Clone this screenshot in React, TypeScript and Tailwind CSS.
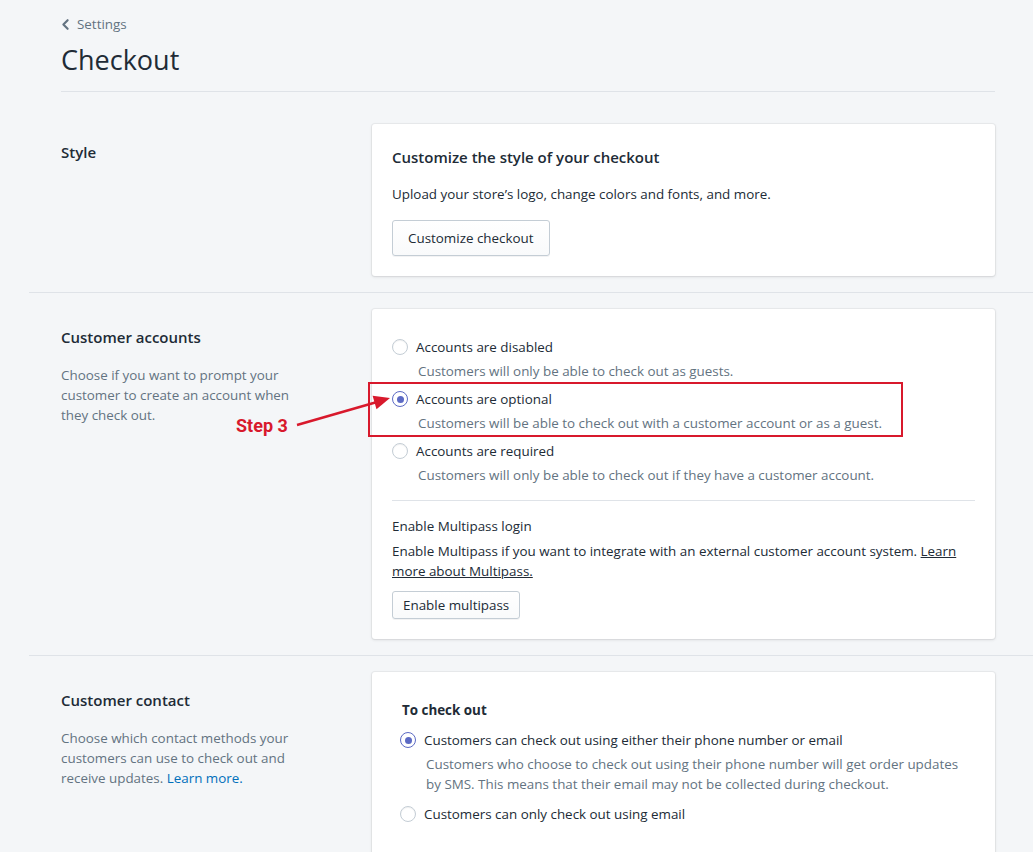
import React from 'react'
import { ChevronLeft } from 'lucide-react'

const Radio = ({ checked }: { checked?: boolean }) => (
  <span
    className={`flex h-4 w-4 shrink-0 items-center justify-center rounded-full border bg-white ${
      checked ? 'border-[#5c6ac4]' : 'border-[#c4cdd5] shadow-[inset_0_1px_1px_rgba(0,0,0,0.06)]'
    }`}
  >
    {checked && <span className="h-[7px] w-[7px] rounded-full bg-[#5c6ac4]" />}
  </span>
)

const Choice = ({ label, help, checked }: { label: string; help: string; checked?: boolean }) => (
  <div>
    <div className="flex items-center gap-2 h-5">
      <Radio checked={checked} />
      <span className="text-[13.4px] leading-5 text-[#212b36]">{label}</span>
    </div>
    <p className="mt-1 pl-[26px] text-[13.4px] leading-5 text-[#637381]">{help}</p>
  </div>
)

const Button = ({ children, slim }: { children: React.ReactNode; slim?: boolean }) => (
  <button
    className={`rounded-[3px] border border-[#c4cdd5] bg-gradient-to-b from-white to-[#f9fafb] text-[13.4px] text-[#212b36] shadow-[0_1px_0_rgba(22,29,37,0.05)] ${
      slim ? 'h-7 px-[10px]' : 'h-9 px-[15px]'
    }`}
  >
    {children}
  </button>
)

const Card = ({ children, className = '' }: { children: React.ReactNode; className?: string }) => (
  <div className={`rounded-[3px] bg-white shadow-[0_0_0_1px_rgba(63,63,68,0.05),0_1px_3px_0_rgba(63,63,68,0.15)] ${className}`}>
    {children}
  </div>
)

const SectionInfo = ({ title, children }: { title: string; children?: React.ReactNode }) => (
  <div className="pt-4 pr-5">
    <h2 className="text-[15px] leading-6 font-semibold text-[#212b36]">{title}</h2>
    {children && <p className="mt-4 max-w-[245px] text-[13.4px] leading-5 text-[#637381]">{children}</p>}
  </div>
)

export default function App() {
  return (
    <div className="relative min-h-screen overflow-hidden bg-[#f4f6f8] pl-[29px] font-['Open_Sans',sans-serif]">
      {/* header */}
      <div className="pl-[32px] pr-[38px]">
        <div className="flex items-center gap-[3px] pt-[14px] text-[13.4px] leading-5 text-[#637381]">
          <ChevronLeft size={17} strokeWidth={3} className="-ml-[4px]" />
          <span>Settings</span>
        </div>
        <h1 className="mt-[10px] text-[27px] leading-8 text-[#212b36]">Checkout</h1>
        <div className="mt-[15px] h-px bg-[#dfe3e8]" />
      </div>

      {/* Style */}
      <div className="grid grid-cols-[311px_1fr] pl-[32px] pr-[38px] pt-8 pb-4">
        <SectionInfo title="Style" />
        <Card className="p-5 pt-[21px]">
          <h3 className="text-[15px] leading-6 font-semibold text-[#212b36]">Customize the style of your checkout</h3>
          <p className="mt-[15px] text-[13.4px] leading-5 text-[#212b36]">Upload your store’s logo, change colors and fonts, and more.</p>
          <div className="mt-4">
            <Button>Customize checkout</Button>
          </div>
        </Card>
      </div>
      <div className="h-px bg-[#dfe3e8]" />

      {/* Customer accounts */}
      <div className="grid grid-cols-[311px_1fr] pl-[32px] pr-[38px] py-4">
        <SectionInfo title="Customer accounts">
          Choose if you want to prompt your customer to create an account when they check out.
        </SectionInfo>
        <Card className="px-5 pt-7 pb-5">
          <div className="space-y-2 pb-[15px]">
            <Choice label="Accounts are disabled" help="Customers will only be able to check out as guests." />
            <Choice checked label="Accounts are optional" help="Customers will be able to check out with a customer account or as a guest." />
            <Choice label="Accounts are required" help="Customers will only be able to check out if they have a customer account." />
          </div>
          <div className="h-px bg-[#dfe3e8]" />
          <div className="pt-[15px]">
            <p className="text-[13.4px] leading-5 text-[#212b36]">Enable Multipass login</p>
            <p className="mt-[5px] text-[13.4px] leading-5 text-[#212b36]">
              Enable Multipass if you want to integrate with an external customer account system.{' '}
              <a className="underline">Learn more about Multipass.</a>
            </p>
            <div className="mt-[10px]">
              <Button slim>Enable multipass</Button>
            </div>
          </div>
        </Card>
      </div>
      <div className="h-px bg-[#dfe3e8]" />

      {/* Customer contact */}
      <div className="grid grid-cols-[311px_1fr] pl-[32px] pr-[38px] py-4">
        <SectionInfo title="Customer contact">
          Choose which contact methods your customers can use to check out and receive updates.{' '}
          <a className="text-[#006fbb]">Learn more.</a>
        </SectionInfo>
        <Card className="pl-[28px] pr-5 pt-7 pb-10">
          <p className="ml-[2px] text-[13.4px] leading-5 font-bold text-[#212b36]">To check out</p>
          <div className="mt-[10px] space-y-[10px]">
            <div>
              <div className="flex h-5 items-center gap-2">
                <Radio checked />
                <span className="text-[13.4px] leading-5 text-[#212b36]">Customers can check out using either their phone number or email</span>
              </div>
              <p className="mt-1 max-w-[562px] pl-[26px] text-[13.4px] leading-5 text-[#637381]">
                Customers who choose to check out using their phone number will get order updates by SMS. This means that their email may not be collected during checkout.
              </p>
            </div>
            <div className="flex h-5 items-center gap-2">
              <Radio />
              <span className="text-[13.4px] leading-5 text-[#212b36]">Customers can only check out using email</span>
            </div>
          </div>
        </Card>
      </div>

      {/* annotation */}
      <div className="pointer-events-none absolute left-[368px] top-[382px] h-[55px] w-[535px] border-2 border-[#d8192c]" />
      <span className="pointer-events-none absolute left-[236px] top-[414px] font-['Roboto',sans-serif] text-[18px] leading-6 font-bold text-[#d8192c]">
        Step 3
      </span>
      <svg className="pointer-events-none absolute left-0 top-0" width="1033" height="852">
        <line x1="297" y1="425" x2="377" y2="402" stroke="#d8192c" strokeWidth="2.5" />
        <polygon points="390,398 376.5,409.2 372.6,395.8" fill="#d8192c" />
      </svg>
    </div>
  )
}
